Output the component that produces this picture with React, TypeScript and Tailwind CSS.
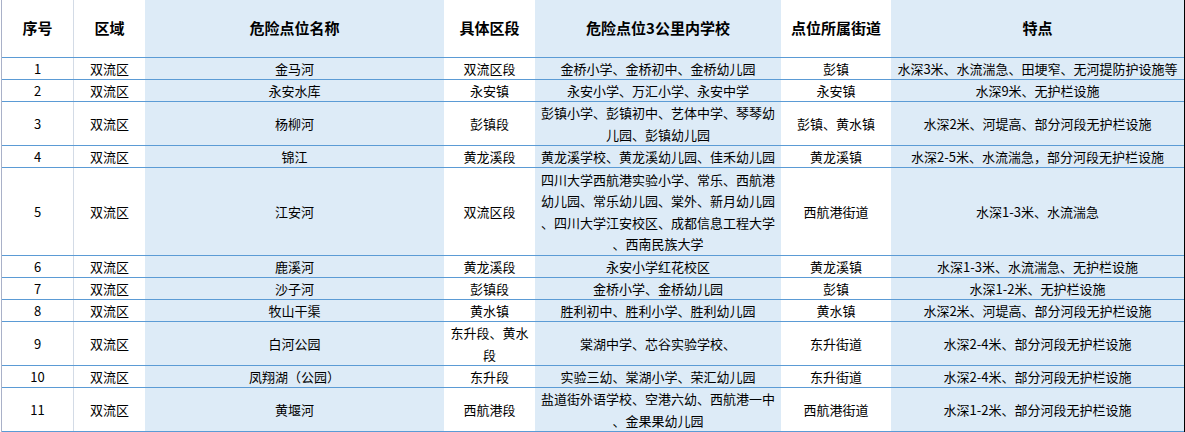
import React from "react";

type Row = { h: string; cells: string[] };

const rows: Row[] = [
  { h: "h-[22px]", cells: ["1", "双流区", "金马河", "双流区段", "金桥小学、金桥初中、金桥幼儿园", "彭镇", "水深3米、水流湍急、田埂窄、无河提防护设施等"] },
  { h: "h-[22px]", cells: ["2", "双流区", "永安水库", "永安镇", "永安小学、万汇小学、永安中学", "永安镇", "水深9米、无护栏设施"] },
  { h: "h-[44px]", cells: ["3", "双流区", "杨柳河", "彭镇段", "彭镇小学、彭镇初中、艺体中学、琴琴幼\n儿园、彭镇幼儿园", "彭镇、黄水镇", "水深2米、河堤高、部分河段无护栏设施"] },
  { h: "h-[22px]", cells: ["4", "双流区", "锦江", "黄龙溪段", "黄龙溪学校、黄龙溪幼儿园、佳禾幼儿园", "黄龙溪镇", "水深2-5米、水流湍急，部分河段无护栏设施"] },
  { h: "h-[88px]", cells: ["5", "双流区", "江安河", "双流区段", "四川大学西航港实验小学、常乐、西航港\n幼儿园、常乐幼儿园、棠外、新月幼儿园\n、四川大学江安校区、成都信息工程大学\n、西南民族大学", "西航港街道", "水深1-3米、水流湍急"] },
  { h: "h-[22px]", cells: ["6", "双流区", "鹿溪河", "黄龙溪段", "永安小学红花校区", "黄龙溪镇", "水深1-3米、水流湍急、无护栏设施"] },
  { h: "h-[22px]", cells: ["7", "双流区", "沙子河", "彭镇段", "金桥小学、金桥幼儿园", "彭镇", "水深1-2米、无护栏设施"] },
  { h: "h-[22px]", cells: ["8", "双流区", "牧山干渠", "黄水镇", "胜利初中、胜利小学、胜利幼儿园", "黄水镇", "水深2米、河堤高、部分河段无护栏设施"] },
  { h: "h-[44px]", cells: ["9", "双流区", "白河公园", "东升段、黄水\n段", "棠湖中学、芯谷实验学校、", "东升街道", "水深2-4米、部分河段无护栏设施"] },
  { h: "h-[22px]", cells: ["10", "双流区", "凤翔湖（公园）", "东升段", "实验三幼、棠湖小学、荣汇幼儿园", "东升街道", "水深2-4米、部分河段无护栏设施"] },
  { h: "h-[44px]", cells: ["11", "双流区", "黄堰河", "西航港段", "盐道街外语学校、空港六幼、西航港一中\n、金果果幼儿园", "西航港街道", "水深1-2米、部分河段无护栏设施"] },
];

const headers = ["序号", "区域", "危险点位名称", "具体区段", "危险点位3公里内学校", "点位所属街道", "特点"];

const cellBg = [
  "bg-white border-r border-[#d3dbe6]",
  "bg-white",
  "bg-[#ddebf7]",
  "bg-white",
  "bg-[#ddebf7]",
  "bg-white",
  "bg-[#ddebf7]",
];

function Lines({ text }: { text: string }) {
  const parts = text.split("\n");
  return (
    <div className="flex flex-col items-center">
      {parts.map((p, i) => (
        <span key={i} className="whitespace-nowrap leading-[21.5px]">
          {p}
        </span>
      ))}
    </div>
  );
}

export default function App() {
  return (
    <div
      className="w-[1185px] h-[432px] bg-white text-black pl-[1px]"
      style={{ fontFamily: '"Noto Sans CJK SC", "Microsoft YaHei", sans-serif' }}
    >
      <div className="w-[1184px] border-l border-r border-l-[#a9b1c8] border-r-black">
        <div className="grid grid-cols-[72px_71px_299px_91px_246px_110px_293px] grid-rows-[minmax(0,1fr)] h-[58px] border-b border-[#5b9bd5]">
          {headers.map((h, i) => (
            <div
              key={i}
              className={`${cellBg[i]} flex items-center justify-center text-[15px] font-bold whitespace-nowrap pb-[1px] overflow-hidden`}
            >
              {h}
            </div>
          ))}
        </div>
        {rows.map((r, ri) => (
          <div
            key={ri}
            className={`grid grid-cols-[72px_71px_299px_91px_246px_110px_293px] grid-rows-[minmax(0,1fr)] ${r.h} border-b border-[#5b9bd5]`}
          >
            {r.cells.map((c, ci) => (
              <div
                key={ci}
                className={`${cellBg[ci]} flex items-center justify-center text-center text-[13px] overflow-hidden`}
              >
                <Lines text={c} />
              </div>
            ))}
          </div>
        ))}
      </div>
    </div>
  );
}
